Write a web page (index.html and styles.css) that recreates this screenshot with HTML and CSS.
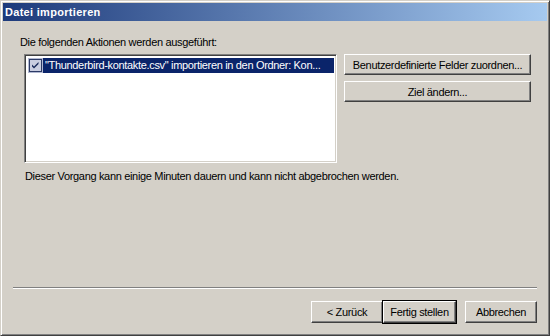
FILE: index.html
```html
<!DOCTYPE html>
<html lang="de">
<head>
  <meta charset="UTF-8">
  <title>Datei importieren</title>
  <link rel="stylesheet" href="styles.css">
</head>
<body>
  <div class="window">
    <div class="titlebar">Datei importieren</div>
    <div class="content">
      <p class="label">Die folgenden Aktionen werden ausgeführt:</p>
      <div class="actions">
        <div class="listbox">
          <div class="item">
            <span class="check">
              <span class="box">
                <svg viewBox="0 0 11 11" width="11" height="11">
                  <path d="M2 4.5 L4 6.5 L8.5 2 L8.5 4 L4 8.5 L2 6.5 Z" fill="#1a2a5a"/>
                </svg>
              </span>
            </span>
            <span class="item-text">"Thunderbird-kontakte.csv" importieren in den Ordner: Kon...</span>
          </div>
        </div>
        <div class="side-buttons">
          <button class="btn">Benutzerdefinierte Felder zuordnen...</button>
          <button class="btn">Ziel ändern...</button>
        </div>
      </div>
      <p class="note">Dieser Vorgang kann einige Minuten dauern und kann nicht abgebrochen werden.</p>
      <div class="separator"></div>
      <div class="footer-buttons">
        <button class="btn btn-nav">&lt; Zurück</button>
        <button class="btn btn-nav btn-default">Fertig stellen</button>
        <button class="btn btn-nav btn-cancel">Abbrechen</button>
      </div>
    </div>
  </div>
</body>
</html>
```

FILE: styles.css
```css
* {
  margin: 0;
  padding: 0;
  box-sizing: border-box;
}

body {
  font-family: "Liberation Sans", Arial, sans-serif;
  font-size: 11px;
  line-height: 13px;
  letter-spacing: -0.33px;
  color: #000;
  background: #d4d0c8;
}

.window {
  width: 550px;
  height: 336px;
  display: flex;
  flex-direction: column;
  padding: 2px;
  background: #d4d0c8;
  border: 1px solid;
  border-color: #d4d0c8 #404040 #404040 #d4d0c8;
  box-shadow: inset 1px 1px #ffffff, inset -1px -1px #808080;
}

.titlebar {
  height: 18px;
  line-height: 18px;
  padding-left: 2px;
  color: #fff;
  font-weight: bold;
  letter-spacing: 0.3px;
  background: linear-gradient(to right, #1d3a7b, #a6caf0);
}

.content {
  flex: 1;
  display: flex;
  flex-direction: column;
  padding: 15px 10px 0 10px;
}

.label {
  padding-left: 7px;
}

.actions {
  display: flex;
  align-items: flex-start;
  margin-top: 5px;
  margin-left: 11px;
  gap: 7px;
}

/* Listbox mit vertieftem Rahmen */
.listbox {
  width: 313px;
  height: 109px;
  background: #fff;
  border: 1px solid;
  border-color: #808080 #ffffff #ffffff #808080;
  box-shadow: inset 1px 1px #404040, inset -1px -1px #d4d0c8;
  padding: 2px 2px 2px 2px;
}

.item {
  display: flex;
  height: 15px;
  margin-top: 1px;
}

.check {
  width: 15px;
  height: 15px;
  margin-left: 1px;
  background: #b2b9d2;
  display: flex;
  align-items: center;
  justify-content: center;
}

.box {
  width: 13px;
  height: 13px;
  border: 1px solid #2c3a66;
  background: #c9cde0;
  display: flex;
  align-items: center;
  justify-content: center;
}

.box svg {
  display: block;
}

.item-text {
  flex: 1;
  background: #0a246a;
  color: #fff;
  padding-left: 2px;
  line-height: 15px;
  white-space: nowrap;
  overflow: hidden;
}

.side-buttons {
  display: flex;
  flex-direction: column;
  gap: 6px;
}

.btn {
  font-family: inherit;
  font-size: 11px;
  letter-spacing: inherit;
  color: #000;
  background: #d4d0c8;
  border: 1px solid;
  border-color: #ffffff #404040 #404040 #ffffff;
  box-shadow: inset -1px -1px #808080;
  height: 21px;
  width: 187px;
  cursor: pointer;
}

.note {
  margin-top: 7px;
  padding-left: 12px;
}

.separator {
  margin-top: auto;
  height: 2px;
  border-top: 1px solid #808080;
  border-bottom: 1px solid #ffffff;
}

.footer-buttons {
  display: flex;
  justify-content: flex-end;
  margin: 12px 0 10px 0;
}

.btn-nav {
  width: 72px;
  height: 22px;
}

.btn-default {
  width: 73px;
  outline: 1px solid #000;
  outline-offset: 0;
}

.btn-cancel {
  margin-left: 9px;
}
```
